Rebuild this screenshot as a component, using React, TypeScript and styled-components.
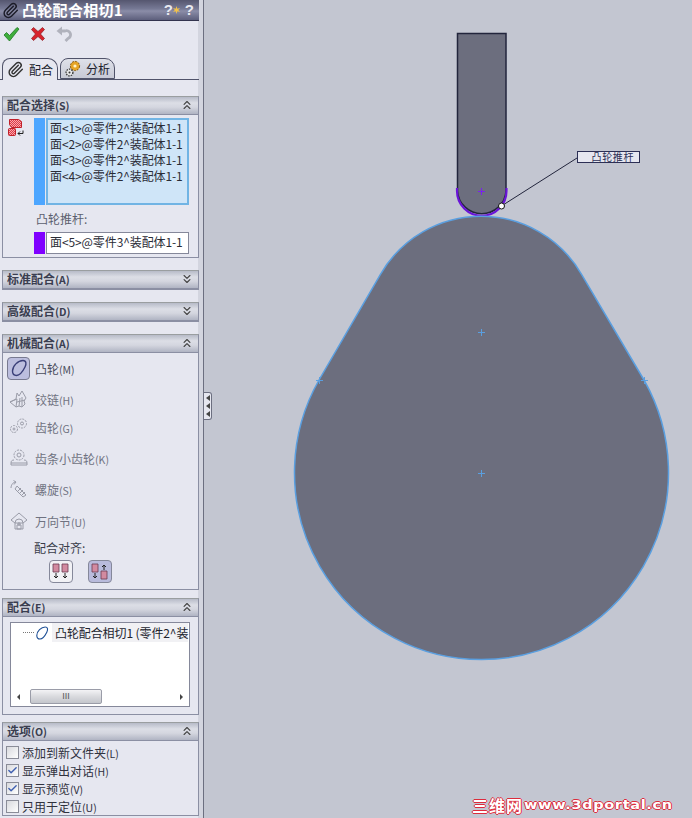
import React from "react";
import styled, { createGlobalStyle } from "styled-components";
import { Paperclip, ChevronsUp, ChevronsDown, Check } from "lucide-react";

const Global = createGlobalStyle`
  html, body { margin: 0; padding: 0; background: #c3c6d1; }
  * { box-sizing: border-box; }
`;

const FONT = `"Noto Sans CJK SC", "Liberation Sans", sans-serif`;

const Page = styled.div`
  display: flex;
  width: 692px;
  height: 818px;
  overflow: hidden;
  font-family: ${FONT};
  & svg { flex: none; }
`;

const Sidebar = styled.aside`
  width: 204px;
  height: 818px;
  flex: none;
  overflow: hidden;
  background: #e6e7f0;
  border-right: 1px solid #6c6f80;
  box-shadow: inset -5px 0 0 #d3d5df;
`;

const TitleBar = styled.header`
  width: 199px;
  height: 21px;
  display: flex;
  align-items: center;
  padding: 0 5px 0 2px;
  gap: 3px;
  background: linear-gradient(#55566f, #777a96 45%, #8b8da8 55%, #5d5f7c);
  border-bottom: 1px solid #33344e;
  color: #fff;
`;

const Title = styled.h1`
  flex: 1;
  margin: 0;
  font-size: 15px;
  font-weight: 700;
  line-height: 20px;
  letter-spacing: 0.3px;
  white-space: nowrap;
`;

const HelpMark = styled.span`
  color: #e8e9f0;
  font: 700 15px/18px "Liberation Sans", sans-serif;
`;

const HelpGroup = styled.div`
  display: flex;
  align-items: center;
  margin-right: 2px;
`;

const Actions = styled.div`
  height: 37px;
  display: flex;
  align-items: flex-start;
  gap: 10px;
  padding: 5px 3px 0;
`;

const Tabs = styled.nav`
  display: flex;
  align-items: flex-end;
  height: 22px;
  width: 199px;
  padding-left: 2px;
  gap: 2px;
  border-bottom: 1px solid #50536a;
`;

const Tab = styled.div<{ $active?: boolean }>`
  height: ${(p) => (p.$active ? 22 : 21)}px;
  width: ${(p) => (p.$active ? 56 : 55)}px;
  margin-bottom: ${(p) => (p.$active ? -1 : 0)}px;
  display: flex;
  align-items: center;
  gap: 5px;
  padding-left: 4px;
  font-size: 12px;
  color: #20222c;
  border: 1px solid #50536a;
  border-bottom: ${(p) => (p.$active ? "none" : "1px solid #50536a")};
  border-radius: 8px 10px 0 0;
  background: ${(p) => (p.$active ? "#e6e7f0" : "linear-gradient(#dfe1e9, #c8cad6)")};
`;

const Group = styled.section<{ $top: number; $h?: number }>`
  width: 197px;
  margin: ${(p) => p.$top}px 0 0 2px;
  height: ${(p) => (p.$h ? `${p.$h}px` : "auto")};
  border: 1px solid #8b8fa3;
  border-top-color: #9a9ea0;
`;

const GroupHead = styled.div`
  height: 18px;
  display: flex;
  align-items: center;
  justify-content: space-between;
  padding: 0 4px 1px 4px;
  background: linear-gradient(#b7bbc8, #dcdee6 35%, #d4d6df 60%, #b0b4c3);
  border-bottom: 1px solid #8b8fa3;
  color: #3a3e50;
  font-size: 12px;
  font-weight: 700;
  line-height: 16px;
  white-space: nowrap;
  & small { font-size: 10.5px; font-weight: 700; }
`;

const SelectBlock = styled.div`
  display: grid;
  grid-template-columns: 31px 11px 144px;
  grid-template-rows: 87px auto 22px;
  padding-top: 3px;
`;

const SelIcon = styled.div`
  padding: 0 0 0 4px;
  height: 24px;
`;

const Strip = styled.div<{ $color: string }>`
  background: ${(p) => p.$color};
`;

const SelectList = styled.div`
  background: #cfe5f8;
  border: 2px solid #71b4e4;
  padding: 1px 0 0 2px;
  margin-left: 1px;
`;

const SelRow = styled.div`
  font-size: 12px;
  line-height: 14px;
  height: 16px;
  color: #2a2c36;
  white-space: nowrap;
  letter-spacing: -0.1px;
`;

const SubLabel = styled.div`
  grid-column: 2 / 4;
  height: 27px;
  padding: 6px 0 0 2px;
  font-size: 12px;
  line-height: 16px;
  color: #5c5f6e;
`;

const SingleBox = styled.div`
  background: #fff;
  border: 1px solid #85889a;
  margin-left: 1px;
  padding-left: 3px;
  font-size: 12px;
  line-height: 17px;
  color: #2a2c36;
  white-space: nowrap;
  letter-spacing: -0.1px;
`;

const MechRow = styled.div<{ $h: number }>`
  height: ${(p) => p.$h}px;
  display: flex;
  align-items: center;
  padding-left: 4px;
  gap: 5px;
  font-size: 12px;
  color: #6f7280;
  & b { font-weight: 400; color: #4a4d5c; }
  & small { font-size: 10.5px; }
`;

const IconSlot = styled.div<{ $on?: boolean }>`
  width: 23px;
  height: 23px;
  flex: none;
  display: flex;
  align-items: center;
  justify-content: center;
  border-radius: 4px;
  border: ${(p) => (p.$on ? "1px solid #787a90" : "1px solid transparent")};
  background: ${(p) => (p.$on ? "#bcbede" : "transparent")};
`;

const AlignLabel = styled.div`
  margin-top: -1px;
  padding-left: 31px;
  font-size: 12px;
  line-height: 16px;
  color: #3a3d4a;
`;

const AlignRow = styled.div`
  display: flex;
  gap: 15px;
  padding: 4px 0 0 46px;
`;

const AlignBtn = styled.div<{ $on?: boolean }>`
  width: 24px;
  height: 23px;
  border-radius: 4px;
  border: 1px solid #85889a;
  display: flex;
  align-items: center;
  justify-content: center;
  background: ${(p) => (p.$on ? "#b9bbdc" : "#f1f1f5")};
`;

const MateBox = styled.div`
  margin: 5px 8px 0 7px;
  height: 85px;
  width: 180px;
  background: #fff;
  border: 1px solid #85889a;
  display: flex;
  flex-direction: column;
  justify-content: space-between;
`;

const MateRow = styled.div`
  display: flex;
  align-items: center;
  height: 19px;
  padding-left: 12px;
  font-size: 12px;
  color: #22242e;
  white-space: nowrap;
`;

const Dots = styled.span`
  width: 11px;
  flex: none;
  border-top: 1px dotted #777;
`;

const MateLabel = styled.span`
  background: #f1f1f4;
  margin-left: 2px;
  padding: 0 0 0 3px;
  line-height: 19px;
  letter-spacing: -0.1px;
`;

const ScrollBar = styled.div`
  height: 17px;
  display: flex;
  align-items: center;
  padding: 0 6px;
  margin-bottom: 1px;
  color: #555;
`;

const Arrow = styled.span<{ $dir: "l" | "r" }>`
  width: 0;
  height: 0;
  flex: none;
  border-top: 3px solid transparent;
  border-bottom: 3px solid transparent;
  ${(p) => (p.$dir === "l" ? "border-right: 3px solid #444;" : "border-left: 3px solid #444;")}
`;

const Thumb = styled.div`
  width: 72px;
  height: 15px;
  margin-left: 10px;
  margin-right: auto;
  border: 1px solid #9a9ca8;
  border-radius: 2px;
  background: linear-gradient(#f3f3f5, #d9dade 50%, #c4c6cc);
  font: 9px/13px "Liberation Sans", sans-serif;
  text-align: center;
  color: #555;
`;

const CheckList = styled.div`
  padding-top: 2px;
`;

const CheckRow = styled.label`
  height: 18px;
  display: flex;
  align-items: center;
  padding-left: 3px;
  gap: 3px;
  font-size: 12px;
  color: #30323e;
  white-space: nowrap;
  & small { font-size: 10.5px; }
`;

const Box = styled.span`
  width: 13px;
  height: 13px;
  flex: none;
  display: flex;
  align-items: center;
  justify-content: center;
  background: linear-gradient(135deg, #d8d9de, #fff);
  border: 1px solid #8a8c98;
  color: #3f5fb0;
`;

const Canvas = styled.main`
  position: relative;
  flex: 1;
  height: 818px;
  background: #c3c6d1;
`;

const Drawing = styled.svg`
  display: block;
  width: 488px;
  height: 818px;
`;

const Handle = styled.div`
  position: absolute;
  left: 0;
  top: 392px;
  width: 8px;
  height: 28px;
  background: #e6e7f0;
  border: 1px solid #6c6f80;
  border-left: none;
  border-radius: 0 3px 3px 0;
  display: flex;
  flex-direction: column;
  justify-content: space-evenly;
  align-items: center;
`;

const HandleArrow = styled.span`
  width: 0;
  height: 0;
  border-top: 3px solid transparent;
  border-bottom: 3px solid transparent;
  border-right: 4px solid #444;
`;

const Callout = styled.div`
  position: absolute;
  left: 373px;
  top: 151px;
  width: 63px;
  height: 12px;
  border: 1px solid #2c2f55;
  background: #e6e7f0;
  color: #2c2f55;
  font-size: 10px;
  line-height: 10px;
  letter-spacing: 0.6px;
  text-align: right;
  padding-right: 5px;
  white-space: nowrap;
`;

const Watermark = styled.div`
  position: absolute;
  left: 268px;
  top: 797px;
  display: flex;
  align-items: center;
  color: #fff;
  white-space: nowrap;
  text-shadow: 1px 0 0 #dc2c3c, -1px 0 0 #dc2c3c, 0 1px 0 #dc2c3c, 0 -1px 0 #dc2c3c;
`;

const WatermarkCn = styled.span`
  font: 700 16px/16px "Noto Sans CJK SC", sans-serif;
  width: 52px;
  letter-spacing: 1px;
`;

const WatermarkUrl = styled.span`
  font: 700 13px/16px "DejaVu Sans", sans-serif;
  letter-spacing: 0.55px;
  display: inline-block;
  transform: scaleX(1.12);
  transform-origin: left center;
`;

const CheckIcon = () => (
  <svg width="17" height="16" viewBox="0 0 17 16">
    <path d="M1 9l2.500-2.500L6.500 9.500 14 1.500l2 1.500L6.500 15z" fill="#3fae3c" stroke="#1e7a24" strokeWidth="0.8" />
  </svg>
);
const CrossIcon = () => (
  <svg width="16" height="16" viewBox="0 0 16 16">
    <path d="M1.500 3.500l2-2 4.500 4 4.500-4 2 2-4 4.500 4 4.500-2 2-4.500-4-4.500 4-2-2 4-4.500z" fill="#d8232c" stroke="#8c1a20" strokeWidth="0.7" />
  </svg>
);
const UndoIcon = () => (
  <svg width="16" height="16" viewBox="0 0 16 16" fill="none">
    <path d="M4 5h5a4 4 0 0 1 3 7.500L9.500 15" stroke="#b0b2bc" strokeWidth="2.800" />
    <path d="M0.500 5L6 0.500v9z" fill="#b0b2bc" />
  </svg>
);
const GearsIcon = () => (
  <svg width="16" height="17" viewBox="0 0 16 17">
    <circle cx="10" cy="6" r="4.600" fill="#e6a425" stroke="#8c5e10" strokeDasharray="2 1" />
    <circle cx="10" cy="6" r="1.600" fill="#fff2c8" />
    <circle cx="4.500" cy="12.500" r="3.400" fill="#e8e8ea" stroke="#333" strokeWidth="1.300" strokeDasharray="1.500 1" />
    <circle cx="4.500" cy="12.500" r="1" fill="#333" />
  </svg>
);
const StarIcon = () => (
  <svg width="7" height="8" viewBox="0 0 7 8">
    <path d="M3.500 0l.8 2.700L7 2l-1.800 2L7 6l-2.700-.7L3.500 8l-.8-2.700L0 6l1.800-2L0 2l2.700.7z" fill="#f2c14a" />
  </svg>
);
const SelectionIcon = () => (
  <svg width="18" height="20" viewBox="0 0 18 20">
    <defs>
      <pattern id="dither" width="2" height="2" patternUnits="userSpaceOnUse">
        <rect width="2" height="2" fill="#f6a8ae" />
        <rect width="1" height="1" fill="#e03a46" />
        <rect x="1" y="1" width="1" height="1" fill="#e03a46" />
      </pattern>
    </defs>
    <path d="M2.500 1.500h9l3 2v6h-10l-2-3z" fill="url(#dither)" stroke="#c0202a" />
    <rect x="1.500" y="10.500" width="7" height="7" rx="1" fill="url(#dither)" stroke="#c0202a" />
    <path d="M11 15.500h5v-3M11 15.500l2-2M11 15.500l2 2" fill="none" stroke="#222" />
  </svg>
);
const CamIcon = ({ stroke = "#3a3f78", size = 20 }: { stroke?: string; size?: number }) => (
  <svg width={size} height={size} viewBox="0 0 20 20" fill="none">
    <path d="M3.500 13C3.500 8 9 2.500 14 2.500 17.500 2.500 17.500 6 16 9 14 13 11 17.500 7.500 17.500 5 17.500 3.500 15.500 3.500 13z" stroke={stroke} strokeWidth="1.400" />
  </svg>
);
const GrayGlyph = ({ kind }: { kind: "hinge" | "gear" | "rack" | "screw" | "joint" }) => {
  const c = "#9a9ca8";
  const body: Record<string, React.ReactNode> = {
    hinge: <path d="M1 13l6 5 3-1 3 1 3-3-1-3 2-3-4-7-3 5-2-3-1 6zM7 18l1-8M10 17l1-8M13 18l0-10M1 13l7-3M8 13l8-2" />,
    gear: (
      <>
        <circle cx="13" cy="6.500" r="4.500" strokeDasharray="2 1" />
        <circle cx="13" cy="6.500" r="1.500" />
        <circle cx="5" cy="12" r="3.500" strokeDasharray="2 1" />
        <circle cx="5" cy="12" r="1" />
      </>
    ),
    rack: (
      <>
        <circle cx="10" cy="7" r="5" strokeDasharray="2 1" />
        <circle cx="10" cy="7" r="2" />
        <path d="M2 15c0-2 1-3 3-3M18 15c0-2-1-3-3-3M2 15h16v2H2z" />
      </>
    ),
    screw: (
      <>
        <path d="M2 9c0-3 2-6 5-6M7 3L4.500 1.500M7 3L5 5.500" />
        <path d="M8 7l-2 3 8 8 3-2zM9 12l3-3M11 14l3-3M13 16l3-3" />
      </>
    ),
    joint: (
      <>
        <path d="M2 9l8-7 8 7-4 3H6z" />
        <path d="M6 18v-6a4 4 0 0 1 8 0v6z" />
        <path d="M9 12h2v2H9zM8 14h4v4H8z" />
      </>
    ),
  };
  return (
    <svg width="20" height="20" viewBox="0 0 20 20" fill="none" stroke={c} strokeWidth="1">
      {body[kind]}
    </svg>
  );
};
const AlignIcon = ({ up }: { up?: boolean }) => (
  <svg width="18" height="17" viewBox="0 0 18 17">
    <path d="M1 1h6v8H1z" fill="#d28aa0" stroke="#6a3a50" strokeWidth="0.800" />
    <path d="M4 10v5M2 13l2 2 2-2" fill="none" stroke="#222" />
    {up ? (
      <>
        <path d="M10 8h6v8h-6z" fill="#d28aa0" stroke="#6a3a50" strokeWidth="0.800" />
        <path d="M13 7V2M11 4l2-2 2 2" fill="none" stroke="#222" />
      </>
    ) : (
      <>
        <path d="M10 1h6v8h-6z" fill="#d28aa0" stroke="#6a3a50" strokeWidth="0.800" />
        <path d="M13 10v5M11 13l2 2 2-2" fill="none" stroke="#222" />
      </>
    )}
  </svg>
);

const Head = ({ text, code, open }: { text: string; code: string; open: boolean }) => (
  <GroupHead>
    <span>
      {text}
      <small>({code})</small>
    </span>
    {open ? <ChevronsUp size={14} color="#444" /> : <ChevronsDown size={14} color="#444" />}
  </GroupHead>
);

const mechs: { label: string; code: string; h: number; kind: "hinge" | "gear" | "rack" | "screw" | "joint" }[] = [
  { label: "铰链", code: "H", h: 32, kind: "hinge" },
  { label: "齿轮", code: "G", h: 24, kind: "gear" },
  { label: "齿条小齿轮", code: "K", h: 38, kind: "rack" },
  { label: "螺旋", code: "S", h: 24, kind: "screw" },
  { label: "万向节", code: "U", h: 40, kind: "joint" },
];

const Cross = ({ x, y, c }: { x: number; y: number; c: string }) => (
  <path d={`M${x - 3.5} ${y}h7M${x} ${y - 3.5}v7`} stroke={c} strokeWidth="1" fill="none" />
);

const OX = 204;

export default function App() {
  return (
    <Page>
      <Global />
      <Sidebar>
        <TitleBar>
          <Paperclip size={17} color="#1c1c28" />
          <Title>凸轮配合相切1</Title>
          <HelpGroup>
            <HelpMark>?</HelpMark>
            <StarIcon />
          </HelpGroup>
          <HelpMark>?</HelpMark>
        </TitleBar>
        <Actions>
          <CheckIcon />
          <CrossIcon />
          <UndoIcon />
        </Actions>
        <Tabs>
          <Tab $active>
            <Paperclip size={17} color="#333" />
            配合
          </Tab>
          <Tab>
            <GearsIcon />
            分析
          </Tab>
        </Tabs>

        <Group $top={16} $h={162}>
          <Head text="配合选择" code="S" open />
          <SelectBlock>
            <SelIcon>
              <SelectionIcon />
            </SelIcon>
            <Strip $color="#4da6ff" />
            <SelectList>
              <SelRow>面&lt;1&gt;@零件2^装配体1-1</SelRow>
              <SelRow>面&lt;2&gt;@零件2^装配体1-1</SelRow>
              <SelRow>面&lt;3&gt;@零件2^装配体1-1</SelRow>
              <SelRow>面&lt;4&gt;@零件2^装配体1-1</SelRow>
            </SelectList>
            <span />
            <SubLabel>凸轮推杆:</SubLabel>
            <span />
            <Strip $color="#7f00ff" />
            <SingleBox>面&lt;5&gt;@零件3^装配体1-1</SingleBox>
          </SelectBlock>
        </Group>

        <Group $top={12}>
          <Head text="标准配合" code="A" open={false} />
        </Group>
        <Group $top={12}>
          <Head text="高级配合" code="D" open={false} />
        </Group>

        <Group $top={12} $h={256}>
          <Head text="机械配合" code="A" open />
          <MechRow $h={30}>
            <IconSlot $on>
              <CamIcon />
            </IconSlot>
            <b>
              凸轮<small>(M)</small>
            </b>
          </MechRow>
          {mechs.map((m) => (
            <MechRow key={m.code} $h={m.h}>
              <IconSlot>
                <GrayGlyph kind={m.kind} />
              </IconSlot>
              <span>
                {m.label}
                <small>({m.code})</small>
              </span>
            </MechRow>
          ))}
          <AlignLabel>配合对齐:</AlignLabel>
          <AlignRow>
            <AlignBtn>
              <AlignIcon />
            </AlignBtn>
            <AlignBtn $on>
              <AlignIcon up />
            </AlignBtn>
          </AlignRow>
        </Group>

        <Group $top={8} $h={117}>
          <Head text="配合" code="E" open />
          <MateBox>
            <MateRow>
              <Dots />
              <CamIcon stroke="#1d4f96" size={16} />
              <MateLabel>凸轮配合相切1 (零件2^装</MateLabel>
            </MateRow>
            <ScrollBar>
              <Arrow $dir="l" />
              <Thumb>III</Thumb>
              <Arrow $dir="r" />
            </ScrollBar>
          </MateBox>
        </Group>

        <Group $top={7}>
          <Head text="选项" code="O" open />
          <CheckList>
            <CheckRow>
              <Box />
              <span>
                添加到新文件夹<small>(L)</small>
              </span>
            </CheckRow>
            <CheckRow>
              <Box>
                <Check size={11} strokeWidth={3} />
              </Box>
              <span>
                显示弹出对话<small>(H)</small>
              </span>
            </CheckRow>
            <CheckRow>
              <Box>
                <Check size={11} strokeWidth={3} />
              </Box>
              <span>
                显示预览<small>(V)</small>
              </span>
            </CheckRow>
            <CheckRow>
              <Box />
              <span>
                只用于定位<small>(U)</small>
              </span>
            </CheckRow>
          </CheckList>
        </Group>
      </Sidebar>

      <Canvas>
        <Drawing viewBox={`${OX} 0 488 818`}>
          <path
            d="M457.500 191V33.500H506V191A24.300 24.300 0 0 1 457.500 191Z"
            fill="#6c6e7e"
            stroke="#22253c"
            strokeWidth="1.500"
          />
          <path d="M457 188V191A24.500 24.500 0 0 0 506.500 191V188" fill="none" stroke="#6a14d8" strokeWidth="2.200" />
          <path
            d="M581.700 274.600L644 380A187 187 0 1 1 319 380L380.300 274.600A116 116 0 0 1 581.700 274.600Z"
            fill="#6c6e7e"
            stroke="#5a9fe0"
            strokeWidth="1.500"
          />
          <Cross x={481.5} y={191.5} c="#7a20f0" />
          <Cross x={481.5} y={332.5} c="#5a9fe0" />
          <Cross x={481.5} y={473.5} c="#5a9fe0" />
          <Cross x={319.5} y={380.5} c="#5a9fe0" />
          <Cross x={644.5} y={380.5} c="#5a9fe0" />
          <path d="M577 158L503 205" stroke="#22253c" strokeWidth="1" />
          <circle cx="501.500" cy="206" r="3" fill="#fff" stroke="#111" />
        </Drawing>
        <Handle>
          <HandleArrow />
          <HandleArrow />
          <HandleArrow />
        </Handle>
        <Callout>凸轮推杆</Callout>
        <Watermark>
          <WatermarkCn>三维网</WatermarkCn>
          <WatermarkUrl>www.3dportal.cn</WatermarkUrl>
        </Watermark>
      </Canvas>
    </Page>
  );
}
